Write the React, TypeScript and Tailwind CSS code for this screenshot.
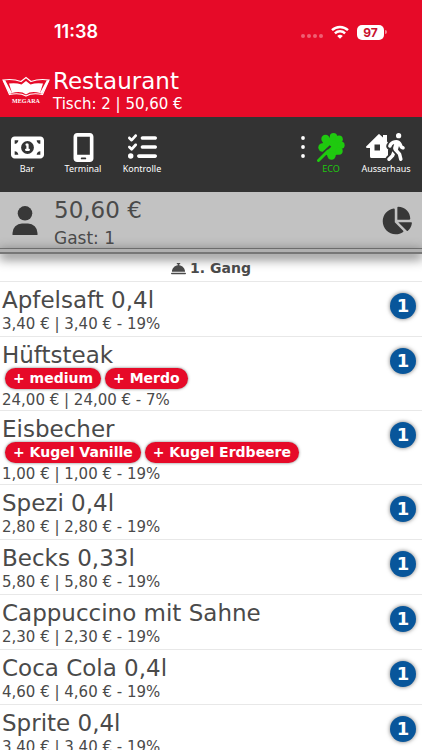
import React from "react";
import { FaBellConcierge, FaChartPie, FaListCheck, FaMobileScreen, FaMoneyBill1, FaPersonWalking } from "react-icons/fa6";

type Item = {
  name: string;
  info: string;
  extras?: string[];
};

const items: Item[] = [
  { name: "Apfelsaft 0,4l", info: "3,40 € | 3,40 € - 19%" },
  { name: "Hüftsteak", info: "24,00 € | 24,00 € - 7%", extras: ["medium", "Merdo"] },
  { name: "Eisbecher", info: "1,00 € | 1,00 € - 19%", extras: ["Kugel Vanille", "Kugel Erdbeere"] },
  { name: "Spezi 0,4l", info: "2,80 € | 2,80 € - 19%" },
  { name: "Becks 0,33l", info: "5,80 € | 5,80 € - 19%" },
  { name: "Cappuccino mit Sahne", info: "2,30 € | 2,30 € - 19%" },
  { name: "Coca Cola 0,4l", info: "4,60 € | 4,60 € - 19%" },
  { name: "Sprite 0,4l", info: "3,40 € | 3,40 € - 19%" },
];

function Wifi() {
  return (
    <svg viewBox="0 0 18 14" className="h-[14px] w-[18px]" fill="none" stroke="#fff" strokeWidth="2.4">
      <path d="M1 5.2a11.6 11.6 0 0 1 16 0" />
      <path d="M3.9 8.3a7.4 7.4 0 0 1 10.2 0" />
      <path d="M9 13.8 6.2 11a4 4 0 0 1 5.6 0z" fill="#fff" stroke="none" />
    </svg>
  );
}

function Logo() {
  return (
    <div className="flex w-12 flex-col items-center">
      <svg viewBox="0 0 48 21" className="h-[21px] w-12" fill="none" stroke="#fff">
        <path d="M7 7.5Q14 6.5 19.500 8.500L24 5 28.500 8.500Q34 6.500 41 7.500L38 17Q29 14.500 24 18.500 19 14.500 10 17Z" fill="#fff" stroke="none" />
        <path d="M1 4Q11 2.500 19 5.500L24 1.500 29 5.500Q37 2.500 47 4L40.500 18.500Q30 16.500 24 20 18 16.500 7.500 18.500Z" strokeWidth="1.2" />
        <path d="M2 4.500 9 17.500M46 4.500 39 17.500" strokeWidth="2.4" />
      </svg>
      <span className="font-['Liberation_Serif',serif] text-[6px] leading-[8px] font-bold tracking-wide">MEGARA</span>
    </div>
  );
}

function OakLeaf() {
  return (
    <svg viewBox="0 0 28 30" className="h-[30px] w-7">
      <g fill="currentColor">
        <path d="M8 6 20 5 25 14 22 22 13 25 8 22 4 18 6 10Z" />
        <circle cx="8.500" cy="7" r="4.200" />
        <circle cx="16.500" cy="4.600" r="3.700" />
        <circle cx="22" cy="7.200" r="3.800" />
        <circle cx="24" cy="13.200" r="3.600" />
        <circle cx="22" cy="19" r="3.700" />
        <circle cx="14.500" cy="23.500" r="4.200" />
        <circle cx="5.500" cy="15.500" r="4.200" />
      </g>
      <path d="M0 26.500 13.500 14" stroke="#333" strokeWidth="2.200" />
      <path d="M1.500 28.500 11 19" stroke="currentColor" strokeWidth="3" strokeLinecap="round" />
    </svg>
  );
}

function TakeAway() {
  return (
    <span className="flex items-center">
      <svg viewBox="0 0 26 28" className="-mr-[7px] h-7 w-[26px]">
        <path
          fill="currentColor"
          fillRule="evenodd"
          d="M12.300 1.400a1 1 0 0 1 1.400 0L17 4.500V2h4v6.500l5 5-4 3V25H5.500A1.500 1.500 0 0 1 4 23.500V15H1a1 1 0 0 1-.6-1.800zM8.500 11.500v6h5.500v-6z"
        />
      </svg>
      <FaPersonWalking className="h-7 w-[22px] overflow-visible stroke-[#333333] stroke-[70px] [paint-order:stroke]" />
    </span>
  );
}

function Tool({ icon, label, className = "" }: { icon: React.ReactNode; label: string; className?: string }) {
  return (
    <button type="button" className={`flex flex-col items-center ${className}`}>
      <span className="flex h-[30px] items-center">{icon}</span>
      <span className="pt-px font-['Noto_Sans',sans-serif] text-[9px] leading-3">{label}</span>
    </button>
  );
}

function ItemRow({ item }: { item: Item }) {
  return (
    <li className="flex items-start justify-between border-b border-[#e8e8e8] pt-1 pr-[6px] pb-px pl-[2px]">
      <div>
        <h3 className="text-[23px] leading-7">{item.name}</h3>
        {item.extras && (
          <div className="-mt-px -mb-[2px] flex gap-1 pl-[3px]">
            {item.extras.map((x) => (
              <span key={x} className="rounded-full bg-[#e60a28] px-2 text-sm leading-[21px] font-bold text-white shadow-[0_0_3px_#777]">
                + {x}
              </span>
            ))}
          </div>
        )}
        <p className={item.extras ? "pt-[5px] text-[15px] leading-[17px]" : "text-[15px] leading-[21px]"}>{item.info}</p>
      </div>
      <button type="button" className="mt-[7px] size-[26px] rounded-full bg-[#08569b] text-lg leading-[26px] font-bold text-white shadow-[0_0_4px_#777]">
        1
      </button>
    </li>
  );
}

export default function App(): React.JSX.Element {
  return (
    <div className="min-h-screen bg-white font-['DejaVu_Sans',sans-serif] text-[#4a4a4a]">
      <header className="bg-[#e60a28] text-white">
        <div className="flex items-center justify-between pt-5 pr-[35px] pb-1 pl-[54px]">
          <time className="font-[Inter,sans-serif] text-lg leading-6 font-semibold">11:38</time>
          <div className="flex items-center">
            <span className="mt-2 mr-2 flex gap-[2px]">
              {[0, 1, 2, 3].map((i) => <i key={i} className="size-1 rounded-full bg-white/35" />)}
            </span>
            <Wifi />
            <span className="ml-2 h-[15px] w-[27px] rounded-[5px] bg-white text-center font-[Inter,sans-serif] text-xs leading-[15px] font-bold text-[#c8102e]">97</span>
            <i className="ml-px h-1 w-[2px] rounded-r-full bg-white/50" />
          </div>
        </div>
        <div className="flex items-center pt-5 pb-1 pl-[2px]">
          <Logo />
          <div className="pl-[3px]">
            <h1 className="text-[23px] leading-[26px]">Restaurant</h1>
            <p className="pt-px text-[15px] leading-[18px]">Tisch: 2 | 50,60 €</p>
          </div>
        </div>
      </header>

      <nav className="flex h-[75px] items-start bg-[#333333] pt-[15px] pr-[11px] pl-[10px] text-white">
        <Tool className="w-[34px]" icon={<FaMoneyBill1 className="size-[33px]" />} label="Bar" />
        <Tool className="ml-5 w-[38px]" icon={<FaMobileScreen className="size-[29px]" />} label="Terminal" />
        <Tool className="ml-5 w-10" icon={<FaListCheck className="h-[30px] w-[29px]" />} label="Kontrolle" />
        <button type="button" aria-label="Mehr" className="mr-[10px] ml-auto flex h-[30px] items-center">
          <svg viewBox="0 0 8 24" className="h-6 w-2" fill="currentColor">
            <circle cx="4" cy="3" r="1.9" />
            <circle cx="4" cy="12" r="1.9" />
            <circle cx="4" cy="21" r="1.9" />
          </svg>
        </button>
        <Tool className="mr-4 w-7 text-[#1fc90f]" icon={<OakLeaf />} label="ECO" />
        <Tool className="w-[50px]" icon={<TakeAway />} label="Ausserhaus" />
      </nav>

      <section className="flex items-center justify-between border-b border-[#777] bg-[#c2c2c2] pr-[10px] pl-3">
        <div className="flex items-center">
          <svg viewBox="0 0 26 29" className="mr-4 h-[29px] w-[26px] text-[#383838]" fill="currentColor">
            <circle cx="13" cy="7.3" r="7.3" />
            <path d="M.5 29v-2A9.5 9.5 0 0 1 10 17.500h6a9.500 9.500 0 0 1 9.500 9.500v2z" />
          </svg>
          <div>
            <h2 className="pt-1 text-[23px] leading-[28px]">50,60 €</h2>
            <p className="pt-1 text-[17px] leading-5">Gast: 1</p>
          </div>
        </div>
        <button type="button" aria-label="Aufteilen" className="text-[#383838]">
          <FaChartPie className="size-[31px]" />
        </button>
      </section>
      <div className="relative h-[5px] border-b-2 border-[#777] bg-[#b0b0b0] shadow-[0_3px_12px_1px_#555]" />

      <main>
        <h2 className="flex items-center justify-center gap-1 border-b border-[#e8e8e8] pt-[2px] text-sm leading-[25px] font-bold">
          <FaBellConcierge className="size-[15px]" />
          1. Gang
        </h2>
        <ul>
          {items.map((item) => <ItemRow key={item.name} item={item} />)}
        </ul>
      </main>
    </div>
  );
}
